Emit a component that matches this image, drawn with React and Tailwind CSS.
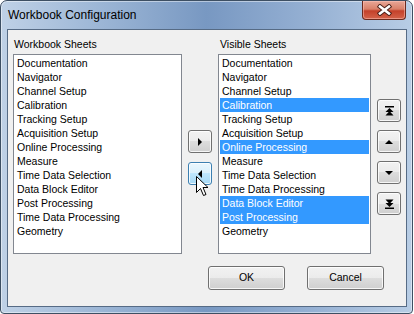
import React from 'react';

const leftItems = [
  'Documentation', 'Navigator', 'Channel Setup', 'Calibration', 'Tracking Setup',
  'Acquisition Setup', 'Online Processing', 'Measure', 'Time Data Selection',
  'Data Block Editor', 'Post Processing', 'Time Data Processing', 'Geometry',
];

const rightItems = [
  { label: 'Documentation' },
  { label: 'Navigator' },
  { label: 'Channel Setup' },
  { label: 'Calibration', sel: true },
  { label: 'Tracking Setup' },
  { label: 'Acquisition Setup' },
  { label: 'Online Processing', sel: true },
  { label: 'Measure' },
  { label: 'Time Data Selection' },
  { label: 'Time Data Processing' },
  { label: 'Data Block Editor', sel: true },
  { label: 'Post Processing', sel: true },
  { label: 'Geometry' },
];

const font = { fontFamily: '"Liberation Sans", Arial, sans-serif' };

function ListBox({ items, width }) {
  return (
    <div className={`${width} h-[200px] mt-[3px] bg-white border border-[#828790] p-[1px]`}>
      {items.map((it) => {
        const item = typeof it === 'string' ? { label: it } : it;
        return (
          <div
            key={item.label}
            className={`h-[14px] leading-[14px] pl-[2px] text-[10.5px] whitespace-nowrap ${item.sel ? 'bg-[#3399ff] text-white' : 'text-black'}`}
          >
            {item.label}
          </div>
        );
      })}
    </div>
  );
}

function SmallButton({ children, hover }) {
  return (
    <div
      className={`w-[24px] h-[23px] rounded-[3px] border flex items-center justify-center shadow-[inset_0_0_0_1px_rgba(255,255,255,0.8)] ${
        hover
          ? 'border-[#3c7fb1] bg-[linear-gradient(to_bottom,#eaf6fd,#d9f0fc_50%,#bee6fd_50%,#a7d9f5)]'
          : 'border-[#707070] bg-[linear-gradient(to_bottom,#f2f2f2,#ebebeb_50%,#dddddd_50%,#cfcfcf)]'
      }`}
    >
      {children}
    </div>
  );
}

function Glyph({ kind }) {
  if (kind === 'right') {
    return <svg width="4" height="8" viewBox="0 0 4 8"><polygon points="0,0 4,4 0,8" fill="#000" /></svg>;
  }
  if (kind === 'left') {
    return <svg width="4" height="8" viewBox="0 0 4 8"><polygon points="4,0 0,4 4,8" fill="#000" /></svg>;
  }
  if (kind === 'up') {
    return <svg width="8" height="4" viewBox="0 0 8 4"><polygon points="4,0 8,4 0,4" fill="#000" /></svg>;
  }
  if (kind === 'down') {
    return <svg width="8" height="4" viewBox="0 0 8 4"><polygon points="0,0 8,0 4,4" fill="#000" /></svg>;
  }
  if (kind === 'top') {
    return (
      <svg width="9" height="10" viewBox="0 0 9 10">
        <rect x="0" y="0" width="9" height="1.5" fill="#000" />
        <polygon points="4.5,2 8.5,6 0.5,6" fill="#000" />
        <polygon points="4.5,5 8.5,9.5 0.5,9.5" fill="#000" />
      </svg>
    );
  }
  return (
    <svg width="9" height="10" viewBox="0 0 9 10">
      <polygon points="0.5,0.5 8.5,0.5 4.5,5" fill="#000" />
      <polygon points="0.5,4 8.5,4 4.5,8" fill="#000" />
      <rect x="0" y="8.5" width="9" height="1.5" fill="#000" />
    </svg>
  );
}

function DialogButton({ children }) {
  return (
    <div className="w-[77px] h-[24px] rounded-[3px] border border-[#707070] flex items-center justify-center text-[10.5px] text-black shadow-[inset_0_0_0_1px_rgba(255,255,255,0.8)] bg-[linear-gradient(to_bottom,#f2f2f2,#ebebeb_50%,#dddddd_50%,#cfcfcf)]">
      {children}
    </div>
  );
}

export default function App() {
  return (
    <div className="relative w-[414px] h-[314px] bg-white" style={font}>
      <div className="w-[413px] h-[314px] rounded-t-[7px] rounded-b-[4px] border border-[#3d4f63] pl-[6px] pr-[5px] pb-[6px] flex flex-col shadow-[inset_0_0_0_1px_rgba(255,255,255,0.45)] bg-[linear-gradient(to_right,#bfd1e6,#9bb5d5_25%,#7898c2_50%,#95b0d3_75%,#b8cde5)]">
        {/* title bar */}
        <div className="h-[28px] flex items-start justify-between">
          <div className="pl-[1px] pt-[6px] text-[12px] leading-[16px] text-black">Workbook Configuration</div>
          <div className="mr-[1px] w-[44px] h-[19px] rounded-b-[4px] border border-t-0 border-[#6b2a1e] flex items-center justify-center shadow-[inset_0_0_0_1px_rgba(255,200,190,0.5)] bg-[linear-gradient(to_bottom,#e8a797,#d98069_45%,#c4412a_55%,#d4634a)]">
            <svg width="15" height="12" viewBox="0 0 15 12">
              <path d="M3 2.5 L12 9.5 M12 2.5 L3 9.5" stroke="#4a1f18" strokeWidth="4.5" strokeLinecap="square" />
              <path d="M3 2.5 L12 9.5 M12 2.5 L3 9.5" stroke="#ffffff" strokeWidth="2.6" strokeLinecap="square" />
            </svg>
          </div>
        </div>

        {/* client area */}
        <div className="h-[278px] bg-[#f0f0f0] border border-[#566b85] px-[5px] pt-[7px] flex flex-col">
          <div className="flex">
            <div className="w-[169px]">
              <div className="h-[14px] leading-[14px] ml-[1px] text-[10.5px] text-black">Workbook Sheets</div>
              <ListBox items={leftItems} width="w-[169px]" />
            </div>
            <div className="w-[24px] ml-[6px] pt-[93px] flex flex-col gap-[9px]">
              <SmallButton><Glyph kind="right" /></SmallButton>
              <SmallButton hover><Glyph kind="left" /></SmallButton>
            </div>
            <div className="w-[153px] ml-[6px]">
              <div className="h-[14px] leading-[14px] ml-[2px] text-[10.5px] text-black">Visible Sheets</div>
              <ListBox items={rightItems} width="w-[153px]" />
            </div>
            <div className="w-[24px] ml-[6px] pt-[62px] flex flex-col gap-[8px]">
              <SmallButton><Glyph kind="top" /></SmallButton>
              <SmallButton><Glyph kind="up" /></SmallButton>
              <SmallButton><Glyph kind="down" /></SmallButton>
              <SmallButton><Glyph kind="bottom" /></SmallButton>
            </div>
          </div>
          <div className="mt-[12px] flex justify-end gap-[22px] pr-[17px]">
            <DialogButton>OK</DialogButton>
            <DialogButton>Cancel</DialogButton>
          </div>
        </div>
      </div>

      {/* mouse cursor */}
      <svg className="absolute left-[196px] top-[176px]" width="13" height="21" viewBox="0 0 13 21">
        <path
          d="M0.5 0.5 L0.5 16.5 L4.5 12.5 L7.5 19.5 L10 18.5 L7 11.5 L12 11.5 Z"
          fill="#ffffff"
          stroke="#000000"
          strokeWidth="1"
          strokeLinejoin="miter"
        />
      </svg>
    </div>
  );
}
